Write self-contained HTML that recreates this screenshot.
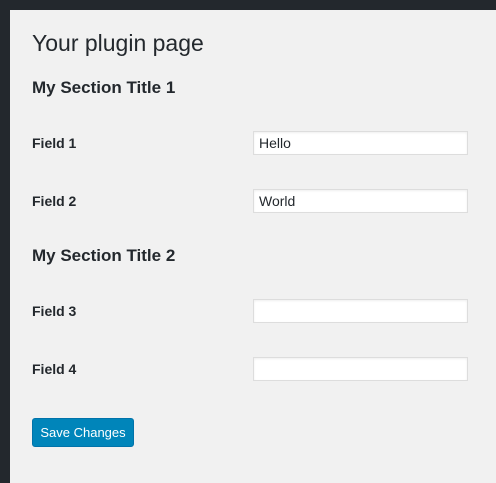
<!DOCTYPE html>
<html><head><style>
body{margin:0;width:496px;height:483px;background:#f1f1f1;position:relative;overflow:hidden;font-family:"Liberation Sans","DejaVu Sans",sans-serif;color:#23282d}
.top{position:absolute;left:0;top:0;width:496px;height:10px;background:#23282d}
.side{position:absolute;left:0;top:0;width:10px;height:483px;background:#23282d}
.t{position:absolute;white-space:nowrap}
h1{position:absolute;left:32px;top:30px;margin:0;font-size:23px;font-weight:400}
.h2{font-size:17px;font-weight:bold;left:32px}
.lbl{font-size:14px;font-weight:bold;left:32px}
.in{position:absolute;left:253px;width:213px;height:22px;background:#fff;border:1px solid #ddd;box-shadow:inset 0 1px 2px rgba(0,0,0,.07);font-size:14px;line-height:22px;padding-left:5px;box-sizing:content-box}
.btn{position:absolute;left:32px;top:418px;width:100px;height:27px;background:#0085ba;border:1px solid #0073aa;border-radius:3px;color:#fff;font-size:13px;line-height:27px;text-align:center}
</style></head><body>
<div class="top"></div><div class="side"></div>
<h1>Your plugin page</h1>
<div class="t h2" style="top:78px">My Section Title 1</div>
<div class="t lbl" style="top:135px">Field 1</div>
<div class="in" style="top:131px;width:208px">Hello</div>
<div class="t lbl" style="top:193px">Field 2</div>
<div class="in" style="top:189px;width:208px">World</div>
<div class="t h2" style="top:246px">My Section Title 2</div>
<div class="t lbl" style="top:303px">Field 3</div>
<div class="in" style="top:299px;width:208px"></div>
<div class="t lbl" style="top:361px">Field 4</div>
<div class="in" style="top:357px;width:208px"></div>
<div class="btn">Save Changes</div>
</body></html>
